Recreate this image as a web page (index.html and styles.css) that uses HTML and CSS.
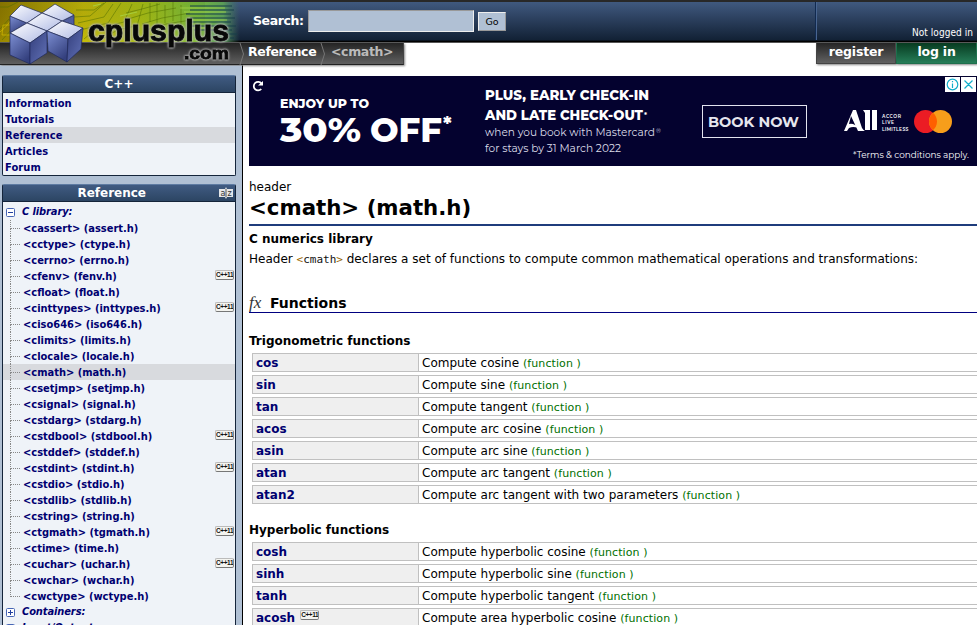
FILE: index.html
```html
<!DOCTYPE html>
<html lang="en">
<head>
<meta charset="utf-8">
<title>&lt;cmath&gt; (math.h) - C++ Reference</title>
<link rel="stylesheet" href="styles.css">
</head>
<body>
<header class="top">
  <form class="search"><label for="q">Search:</label><input id="q" type="text"><button type="button">Go</button></form>
  <div class="user">Not logged in</div>
</header>
<div class="subbar">
  <nav class="crumbs">
    <svg class="chev" width="6" height="22" viewBox="0 0 6 22"><path d="M1 0 4.500 11 1 22" fill="none" stroke="#777"/></svg>
    <span class="crumb-ref">Reference</span>
    <svg class="chev" width="6" height="22" viewBox="0 0 6 22"><path d="M1 0 4.500 11 1 22" fill="none" stroke="#777"/></svg>
    <span class="crumb-cur">&lt;cmath&gt;</span>
  </nav>
  <nav class="account"><a class="register">register</a><a class="login">log in</a></nav>
</div>
<svg class="logo" width="246" height="66" viewBox="0 0 246 66">
  <defs>
    <linearGradient id="bg"><stop offset="0" stop-color="#8c7800"/><stop offset=".35" stop-color="#bdb30a"/><stop offset=".6" stop-color="#a3bb16"/><stop offset=".82" stop-color="#74b83c"/><stop offset=".93" stop-color="#5a9c58"/><stop offset="1" stop-color="#3f7060" stop-opacity="0"/></linearGradient>
    <linearGradient id="shade" x2="0" y2="1"><stop offset="0" stop-color="#000" stop-opacity=".05"/><stop offset="1" stop-color="#ff0" stop-opacity=".13"/></linearGradient>
    <linearGradient id="top" x2="1" y2="1"><stop offset="0" stop-color="#fff"/><stop offset="1" stop-color="#aeb9e4"/></linearGradient>
    <linearGradient id="lf" x2=".6" y2="1"><stop offset="0" stop-color="#7d8fd3"/><stop offset="1" stop-color="#34407e"/></linearGradient>
    <linearGradient id="rt" x2="1" y2="1"><stop offset="0" stop-color="#333e7b"/><stop offset="1" stop-color="#6272b8"/></linearGradient>
  </defs>
  <rect y="2" width="240" height="40" fill="url(#bg)"/>
  <rect y="2" width="205" height="40" fill="url(#shade)"/>
  <g fill="none" stroke="#4e6b00" stroke-opacity=".5">
    <path d="M0 7H8L18 2M0 29 9 19M2 40 13 28M76 10H94L104 3M74 17 90 16 106 2M78 23 104 17 113 4M80 30 108 23 121 3M84 39 96 29 124 22 132 4M101 40 119 29 137 26 143 4"/>
    <path d="M126 13 142 9 160 4M128 19 148 13 176 8M150 3V22M157 3V25M165 5V23M173 2V21M181 5V26M142 24 162 18 190 13M146 30 166 24 191 20"/>
    <path d="M190 6H232M190 10H234M186 14H231M190 18H235M188 22H231M192 26H236M194 30H232M228 34H237M230 38H234" stroke="#173e4b" stroke-opacity=".65" stroke-width="1.500"/>
  </g>
  <path d="M180 8H225M184 12H226M189 20H227M188 28H228M93 6 101 4M120 16 137 12M110 31 126 27" fill="none" stroke="#a8d64a" stroke-opacity=".75"/>
  <path d="M0 32C6 27 10 22 12 18M3 25H12V35H2Z" fill="none" stroke="#d3bb00" stroke-opacity=".7"/>
  <g stroke="#202a5c" stroke-width=".7" stroke-linejoin="round">
    <path d="M10 16 27 23 10 33Z" fill="url(#lf)"/><path d="M74 15 62 21 74 25Z" fill="#4f5d9e"/>
    <path d="M10 16 21 5 42 13 27 23Z" fill="url(#top)"/><path d="M42 13 55 4 74 15 62 21Z" fill="url(#top)"/>
    <path d="M27 23 42 13 62 21 47 31Z" fill="url(#top)"/>
    <path d="M10 33 27 23 47 31 30 43Z" fill="url(#top)"/><path d="M10 33 30 43V64L10 55Z" fill="url(#lf)"/><path d="M30 43 47 31V53L30 64Z" fill="url(#rt)"/>
    <path d="M47 31 62 21 83 28 68 39Z" fill="url(#top)"/><path d="M47 31 68 39 67 62 48 51Z" fill="url(#lf)"/><path d="M68 39 83 28 81 49 67 62Z" fill="url(#rt)"/>
  </g>
  <g class="wordmark"><text x="88" y="41" font-size="29" textLength="141" lengthAdjust="spacingAndGlyphs">cplusplus</text><text x="184" y="59" font-size="17" textLength="45" lengthAdjust="spacingAndGlyphs">.com</text></g>
</svg>
<div class="page">
<aside class="side">
  <section class="box">
    <h3>C++</h3>
    <ul class="links"><li>Information</li><li>Tutorials</li><li class="on">Reference</li><li>Articles</li><li>Forum</li></ul>
  </section>
  <section class="box ref">
    <h3>Reference<svg class="az" width="14" height="12" viewBox="0 0 14 12"><path d="M0 2H6L7 0 8 2H14V10H8L7 12 6 10H0Z" fill="#e4e6e8"/><path d="M7 2V10" stroke="#555"/><text x="1.500" y="8.500" font-size="8">a</text><text x="8.500" y="8.500" font-size="8">z</text></svg></h3>
    <div class="group"><svg width="9" height="9"><rect x=".5" y=".5" width="8" height="8" rx="1" fill="#fff" stroke="#4766b5"/><path d="M2 4.500H7" stroke="#2340a0"/></svg><span>C library:</span></div>
    <ul class="tree">
      <li>&lt;cassert&gt; (assert.h)</li><li>&lt;cctype&gt; (ctype.h)</li><li>&lt;cerrno&gt; (errno.h)</li>
      <li>&lt;cfenv&gt; (fenv.h)<i class="v11">C++11</i></li><li>&lt;cfloat&gt; (float.h)</li>
      <li>&lt;cinttypes&gt; (inttypes.h)<i class="v11">C++11</i></li><li>&lt;ciso646&gt; (iso646.h)</li>
      <li>&lt;climits&gt; (limits.h)</li><li>&lt;clocale&gt; (locale.h)</li><li class="on">&lt;cmath&gt; (math.h)</li>
      <li>&lt;csetjmp&gt; (setjmp.h)</li><li>&lt;csignal&gt; (signal.h)</li><li>&lt;cstdarg&gt; (stdarg.h)</li>
      <li>&lt;cstdbool&gt; (stdbool.h)<i class="v11">C++11</i></li><li>&lt;cstddef&gt; (stddef.h)</li>
      <li>&lt;cstdint&gt; (stdint.h)<i class="v11">C++11</i></li><li>&lt;cstdio&gt; (stdio.h)</li>
      <li>&lt;cstdlib&gt; (stdlib.h)</li><li>&lt;cstring&gt; (string.h)</li>
      <li>&lt;ctgmath&gt; (tgmath.h)<i class="v11">C++11</i></li><li>&lt;ctime&gt; (time.h)</li>
      <li>&lt;cuchar&gt; (uchar.h)<i class="v11">C++11</i></li><li>&lt;cwchar&gt; (wchar.h)</li><li>&lt;cwctype&gt; (wctype.h)</li>
    </ul>
    <div class="group"><svg width="9" height="9"><rect x=".5" y=".5" width="8" height="8" rx="1" fill="#fff" stroke="#4766b5"/><path d="M2 4.500H7M4.500 2V7" stroke="#2340a0"/></svg><span>Containers:</span></div>
    <div class="group"><svg width="9" height="9"><rect x=".5" y=".5" width="8" height="8" rx="1" fill="#fff" stroke="#4766b5"/><path d="M2 4.500H7M4.500 2V7" stroke="#2340a0"/></svg><span>Input/Output:</span></div>
  </section>
</aside>
<main class="main">
  <svg class="ad" width="728" height="90" viewBox="0 0 728 90">
    <rect width="728" height="90" fill="#04022f"/>
    <path d="M12.500 7.500A4.300 4.300 0 1 0 12.300 13" fill="none" stroke="#fff" stroke-width="1.800"/><path d="M9 9.500H14V5Z" fill="#fff"/>
    <g class="adt" fill="#fff">
      <text x="31" y="31.500" font-size="12.500" font-weight="800" textLength="89" lengthAdjust="spacingAndGlyphs">ENJOY UP TO</text>
      <g font-size="34" font-weight="800"><text x="31" y="66" textLength="81" lengthAdjust="spacingAndGlyphs">30%</text><text x="121" y="66" textLength="72" lengthAdjust="spacingAndGlyphs">OFF</text></g>
      <text x="194" y="55" font-size="19" font-weight="800">*</text>
      <g font-size="14" font-weight="800"><text x="236" y="24" textLength="164" lengthAdjust="spacingAndGlyphs">PLUS, EARLY CHECK-IN</text><text x="236" y="43.500" textLength="158" lengthAdjust="spacingAndGlyphs">AND LATE CHECK-OUT</text></g>
      <text x="395" y="41" font-size="7" font-weight="700">*</text>
      <g font-size="11" fill="#dcdce8"><text x="236" y="60" textLength="170" lengthAdjust="spacingAndGlyphs">when you book with Mastercard</text><text x="407" y="57" font-size="6">®</text><text x="236" y="76" textLength="136" lengthAdjust="spacingAndGlyphs">for stays by 31 March 2022</text></g>
      <rect x="453.500" y="29.500" width="104" height="32" fill="none" stroke="#e3e3ef"/>
      <text x="459" y="50.500" font-size="15" font-weight="700" fill="#e6e6ee" textLength="91" lengthAdjust="spacingAndGlyphs">BOOK NOW</text>
      <g><path d="M604 34H607L613 52Q615 55 616 55H609L602 40 600 48Q603 47 606 49L609 52Q604 50 600 52L598 55H595Z"/><path d="M614 34H621V54H616V37ZM623 34H628V54H623Z"/></g>
      <g font-size="4.500" font-weight="600" letter-spacing=".6"><text x="633" y="42">ACCOR</text><text x="633" y="48">LIVE</text><text x="633" y="54.500" textLength="27">LIMITLESS</text></g>
      <text x="604" y="82" font-size="9" textLength="116" lengthAdjust="spacingAndGlyphs">*Terms &amp; conditions apply.</text>
    </g>
    <circle cx="676.500" cy="45.500" r="11.500" fill="#eb1c24"/><circle cx="691.500" cy="45.500" r="11.500" fill="#f79e1b"/><path d="M684 36.800A11.500 11.500 0 0 1 684 54.200A11.500 11.500 0 0 1 684 36.800" fill="#ff5f00"/>
    <path d="M696 1H711V16H696ZM712 1H727V16H712Z" fill="#fff"/><g fill="none" stroke="#14aecb" stroke-width="1.200"><circle cx="703.500" cy="8.500" r="5.300"/><path d="M703.500 7.500V12M703.500 5V6.200M715.500 4.500 723.500 12.500M723.500 4.500 715.500 12.500"/></g>
  </svg>
  <div class="kind">header</div>
  <h1>&lt;cmath&gt; (math.h)</h1>
  <div class="sub">C numerics library</div>
  <p>Header <code><b>&lt;</b>cmath<b>&gt;</b></code> declares a set of functions to compute common mathematical operations and transformations:</p>
  <h2><i class="fx">fx</i>Functions</h2>
  <h4>Trigonometric functions</h4>
  <dl>
    <div><dt>cos</dt><dd>Compute cosine <span>(function )</span></dd></div>
    <div><dt>sin</dt><dd>Compute sine <span>(function )</span></dd></div>
    <div><dt>tan</dt><dd>Compute tangent <span>(function )</span></dd></div>
    <div><dt>acos</dt><dd>Compute arc cosine <span>(function )</span></dd></div>
    <div><dt>asin</dt><dd>Compute arc sine <span>(function )</span></dd></div>
    <div><dt>atan</dt><dd>Compute arc tangent <span>(function )</span></dd></div>
    <div><dt>atan2</dt><dd>Compute arc tangent with two parameters <span>(function )</span></dd></div>
  </dl>
  <h4 class="hyp">Hyperbolic functions</h4>
  <dl>
    <div><dt>cosh</dt><dd>Compute hyperbolic cosine <span>(function )</span></dd></div>
    <div><dt>sinh</dt><dd>Compute hyperbolic sine <span>(function )</span></dd></div>
    <div><dt>tanh</dt><dd>Compute hyperbolic tangent <span>(function )</span></dd></div>
    <div><dt>acosh<i class="v11">C++11</i></dt><dd>Compute area hyperbolic cosine <span>(function )</span></dd></div>
  </dl>
</main>
</div>
</body>
</html>
```
FILE: styles.css
```css
* { box-sizing: border-box; }
body { margin: 0; width: 977px; height: 625px; overflow: hidden; position: relative; background: #fff; color: #000; font: 12px "DejaVu Sans", sans-serif; }
ul, dl, dd, h1, h2, h3, h4, p { margin: 0; padding: 0; list-style: none; }
.top { display: flex; justify-content: space-between; height: 43px; border-top: 2px solid #282828; border-bottom: 1px solid #555; background: linear-gradient(#40597f, #122135 95%, #000 98%); }
.search { display: flex; align-items: center; margin: 0 0 2px 253px; color: #fff; font-weight: bold; }
.search label { width: 55px; margin-top: -2px; font-size: 12.500px; letter-spacing: -.4px; }
.search input { width: 166px; height: 22px; padding: 0; border: 1px solid; border-color: #999 #eee #eee #999; background: #b0c0d4; }
.search button { width: 28px; height: 19px; margin: 1px 0 0 4px; padding: 0; border: 1px solid; border-color: #eee #999 #999 #eee; background: #b0c0d4; font: 9.500px "DejaVu Sans", sans-serif; }
.user { width: 162px; border-left: 1px solid #112a50; box-shadow: inset 1px 0 #496590; color: #fff; font: 10px/62px "DejaVu Sans Condensed", "DejaVu Sans", sans-serif; text-align: right; padding-right: 4px; white-space: nowrap; height: 38px; letter-spacing: .05px; }
.subbar { display: flex; justify-content: space-between; height: 23px; background: linear-gradient(90deg, #b0c0d4 242px, #000 242px 243px, #fff 243px); }
.crumbs { display: flex; width: 404px; height: 22px; padding-left: 239px; border-bottom: 1px solid #222; border-right: 1px solid #444; background: linear-gradient(#242424, #606060); box-shadow: 1px 1px 2px #888; color: #fff; font-weight: bold; font-size: 12.500px; line-height: 18px; }
.crumb-ref { width: 75px; padding-left: 3px; letter-spacing: -.35px; }
.crumb-cur { padding-left: 5px; color: #bbb; letter-spacing: -.35px; }
.account { display: flex; width: 161px; height: 21px; color: #fff; font: bold 12.500px/18px "DejaVu Sans", sans-serif; letter-spacing: -.2px; text-align: center; }
.account a { width: 80px; border: 1px solid #444; border-top: 0; background: linear-gradient(#252525, #626262); box-shadow: 1px 1px 2px #888; }
.account .login { width: 81px; border-color: #1e704d; background: linear-gradient(#073b20, #267d58); }
.logo { position: absolute; left: 0; top: 0; }
.wordmark { font-family: "Liberation Sans", sans-serif; font-weight: bold; fill: #080808; stroke: #080808; stroke-width: .8px; filter: drop-shadow(0 0 1px #c8c8c8) drop-shadow(0 0 1px #a8a8a8); }
.page { display: flex; height: 559px; overflow: hidden; }
.side { width: 243px; flex: none; padding: 9px 6px 0 2px; border-right: 1px solid #000; background: #b0c0d4; color: #000070; font: bold 11px/16px "DejaVu Sans Condensed", "DejaVu Sans", sans-serif; }
.box { width: 234px; height: 101px; border: 1px solid #14243a; border-top-color: #5e7ba2; background: #eff3f8; border-radius: 2px; }
.box h3 { height: 17px; margin-bottom: 2px; background: linear-gradient(#405b82, #2c4563); border-bottom: 1px solid #14243a; color: #fff; text-align: center; font: bold 12px/16px "DejaVu Sans", sans-serif; }
.ref { height: 500px; margin-top: 8px; }
.ref h3 { display: flex; justify-content: flex-end; align-items: center; padding-right: 2px; }
.az { margin-left: 73px; fill: #333; font-weight: normal; }
.links li { padding-left: 2px; height: 16px; line-height: 18px; letter-spacing: .1px; }
.on { background: #d8dade; }
.group { display: flex; align-items: center; gap: 7px; height: 16px; padding-left: 3px; font-style: italic; }
.group span { line-height: 18px; letter-spacing: -.1px; }
.tree li { position: relative; display: flex; justify-content: space-between; height: 16px; line-height: 18px; padding: 0 1px 0 20px; white-space: nowrap; }
.tree li::before { content: ""; position: absolute; left: 7px; top: 0; width: 9px; height: 8px; border-left: 1px dotted #888; border-bottom: 1px dotted #888; }
.tree li:not(:last-child)::after { content: ""; position: absolute; left: 7px; top: 8px; height: 8px; border-left: 1px dotted #888; }
.v11 { display: inline-block; width: 19px; height: 10px; border: 1px solid #bbb; border-bottom-color: #777; border-right-color: #888; border-radius: 2px; background: #f4f4f0; color: #111; font: bold 6.500px/8px "Liberation Sans", sans-serif; letter-spacing: -.4px; text-align: center; overflow: hidden; }
.tree .v11 { margin-top: 2px; }
.main { flex: 1; min-width: 0; padding: 10px 0 0 6px; overflow: hidden; }
.ad { display: block; }
.adt { font-family: Montserrat, "Open Sans", sans-serif; }
.kind { height: 25px; padding-top: 13px; line-height: 16px; }
h1 { height: 35px; border-bottom: 2px solid #1f3c7c; font: bold 21.300px/33px "DejaVu Sans", sans-serif; white-space: nowrap; }
.sub { height: 22px; font-weight: bold; line-height: 26px; }
p { height: 41px; line-height: 22px; white-space: nowrap; }
code { font: 11px "DejaVu Sans Mono", monospace; color: #111; }
code b { font-weight: normal; color: #960; }
h2 { display: flex; align-items: baseline; height: 24px; border-bottom: 1px solid #000080; font: bold 14px/29px "DejaVu Sans", sans-serif; }
.fx { width: 21px; color: #333; font: italic 17px/16px "Liberation Serif", serif; }
h4 { height: 40px; padding-top: 20px; font: bold 12px/16px "DejaVu Sans", sans-serif; }
.hyp { height: 38px; padding-top: 18px; }
dl { display: flex; flex-direction: column; gap: 3px; margin-left: 3px; }
dl div { display: flex; height: 19px; border: 1px solid #c0c0c0; border-right: 0; line-height: 18px; white-space: nowrap; }
dt { width: 166px; padding-left: 3px; border-right: 1px solid #c0c0c0; background: #efefef; color: #000070; font-weight: bold; }
dt .v11 { margin-left: 5px; vertical-align: 2px; }
dd { padding-left: 3px; }
dd span { color: #007000; font-size: 11px; letter-spacing: .1px; }
```
